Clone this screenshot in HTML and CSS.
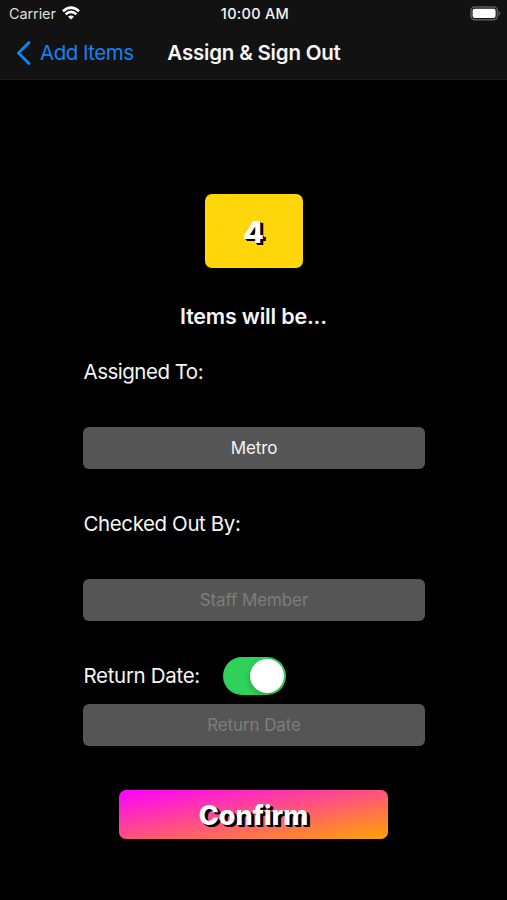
FILE: index.html
```html
<!DOCTYPE html>
<html lang="en">
<head>
<meta charset="utf-8">
<title>Assign &amp; Sign Out</title>
<link rel="stylesheet" href="styles.css">
</head>
<body>
<header class="top">
  <div class="status">
    <div class="carrier"><span class="carrier-name">Carrier</span>
      <svg class="wifi" viewBox="0 0 18 14" width="18" height="14"><path d="M9 13.6 L6 10.7 Q9 8.2 12 10.7Z" fill="#fff"/><path d="M3.6 8.2 Q9 3.5 14.4 8.2M.9 5.2 Q9-2 17.1 5.2" fill="none" stroke="#fff" stroke-width="2.5"/></svg>
    </div>
    <div class="clock">10:00 AM</div>
    <svg class="battery" viewBox="0 0 31 15" width="31" height="15"><rect x="1" y="1" width="26.4" height="12.8" rx="3.8" fill="none" stroke="#5c5c5e" stroke-width="1.5"/><rect x="2.6" y="2.7" width="23" height="9.4" rx="2" fill="#fff"/><path d="M28.6 5v4.8q1.6-.8 1.6-2.4T28.6 5z" fill="#5c5c5e"/></svg>
  </div>
  <nav class="nav">
    <a class="back"><svg viewBox="0 0 15 24" width="15" height="24"><path d="M13 1.5 2.5 12 13 22.5" fill="none" stroke="#1184f5" stroke-width="2.9" stroke-linecap="round" stroke-linejoin="round"/></svg><span class="back-label">Add Items</span></a>
    <h1 class="title">Assign &amp; Sign Out</h1>
    <span></span>
  </nav>
</header>
<main class="content">
  <div class="count">4</div>
  <h2 class="summary">Items will be...</h2>
  <form class="form">
    <label class="label assigned">Assigned To:</label>
    <div class="field metro">Metro</div>
    <label class="label checked">Checked Out By:</label>
    <div class="field placeholder staff">Staff Member</div>
    <div class="date-row"><label class="label return">Return Date:</label><span class="switch"><span class="knob"></span></span></div>
    <div class="field placeholder date">Return Date</div>
  </form>
  <div class="confirm">Confirm</div>
</main>
</body>
</html>
```
FILE: styles.css
```css
* { box-sizing: border-box; }
body { margin: 0; height: 900px; background: #000; color: #f5f5f5; font-family: Inter, "Liberation Sans", sans-serif; white-space: nowrap; overflow: hidden; }
.top { height: 80px; background: #121212; border-bottom: 1px solid #1b1b1b; }
.status { height: 28px; display: grid; grid-template-columns: 1fr auto 1fr; align-items: center; padding: 0 6px 0 9px; }
.carrier { display: flex; align-items: center; gap: 6px; font-size: 14.5px; letter-spacing: -.1px; color: #ddd; }
.carrier-name { line-height: 20px; }
.wifi { margin-top: -2px; }
.clock { font-size: 14.5px; font-weight: 500; letter-spacing: .3px; line-height: 20px; }
.battery { justify-self: end; margin-top: -1px; }
.nav { height: 50px; display: grid; grid-template-columns: 1fr auto 1fr; align-items: center; padding: 0 15px 0 16px; }
.back { display: flex; align-items: center; gap: 9px; color: #1184f5; font-size: 20.5px; letter-spacing: -.5px; }
.back-label { line-height: 24px; }
.title { margin: 0; font-size: 20.5px; font-weight: 600; letter-spacing: -.2px; line-height: 26px; }
.content { display: flex; flex-direction: column; align-items: center; padding-top: 114px; }
.count { width: 98px; height: 74px; border-radius: 7px; background: #ffd60a; color: #fff; font-size: 30px; font-weight: 800; line-height: 76px; text-align: center; text-shadow: 1px 1px #000, 2px 2px #000, 3px 2px #000; }
.summary { margin: 34px 0 0; font-size: 21.5px; font-weight: 600; letter-spacing: -.2px; line-height: 28px; }
.form { width: 342px; margin: 28px 0 0 1px; }
.label { display: block; padding-left: .5px; font-size: 20.5px; letter-spacing: -.4px; line-height: 28px; }
.assigned { letter-spacing: -.5px; }
.field { height: 42px; border-radius: 6px; background: #555; color: #f5f5f5; font-size: 17px; line-height: 42px; text-align: center; letter-spacing: -.1px; }
.placeholder { color: #7d7d7d; }
.metro { margin-top: 41px; }
.checked { margin-top: 41px; }
.staff { margin-top: 41px; }
.date-row { display: flex; align-items: center; height: 38px; margin: 36px 0 9px; gap: 23px; }
.return { width: 117px; letter-spacing: -.32px; }
.date { line-height: 43px; }
.switch { width: 63px; height: 38px; padding: 2px; border-radius: 19px; background: #30d158; display: flex; justify-content: flex-end; }
.knob { width: 34px; height: 34px; border-radius: 50%; background: #fff; box-shadow: -1px 2px 5px #0003; }
.confirm { width: 269px; height: 49px; margin-top: 44px; border-radius: 7px; background: linear-gradient(to bottom right, #f0f, #ffa500); color: #fff; font-size: 27px; font-weight: 800; line-height: 51px; text-align: center; text-shadow: 1px 1px #000, 2px 2px #000, 3px 2px #000; }
```
